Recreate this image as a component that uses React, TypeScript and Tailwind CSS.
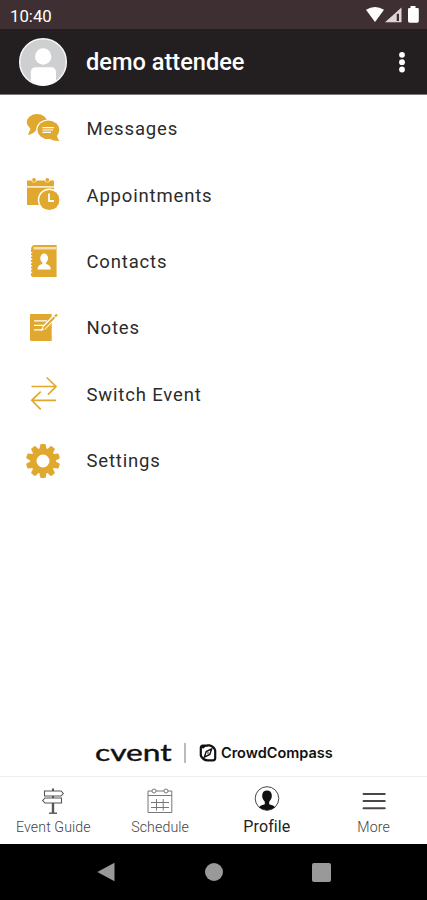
import type { ReactNode } from 'react';

interface MenuItem {
  label: string;
  icon: ReactNode;
}

interface TabProps {
  label: string;
  icon: ReactNode;
  active?: boolean;
}

const GOLD = '#e0a82e';

const MessagesIcon = () => (
  <svg width="40" height="40" viewBox="0 0 40 40" fill={GOLD}>
    <ellipse cx="14" cy="13" rx="10.3" ry="7.9" />
    <path d="M5 16 L7.5 20 L4.8 26 Q11 25 14 20 Z" />
    <ellipse cx="25.2" cy="20.8" rx="12" ry="10.4" fill="#fff" />
    <ellipse cx="25.4" cy="20.8" rx="10.9" ry="9.3" />
    <path d="M34.5 24 L34 27.5 L36.3 32 Q30 32 26 29.5 Z" />
    <path d="M19.5 18.6 H31 M19.5 21 H30 M19.5 23.4 H28" stroke="#fff" strokeWidth="1.2" />
  </svg>
);

const AppointmentsIcon = () => (
  <svg width="40" height="40" viewBox="0 0 40 40" fill={GOLD}>
    <path d="M4 5.6 H8.2 A3 3 0 0 0 13.8 5.6 H21.5 A3 3 0 0 0 27.1 5.6 H31 V11.2 H4 Z" />
    <circle cx="11" cy="5" r="1.9" />
    <circle cx="24.3" cy="5" r="1.9" />
    <path d="M4 12.6 H31 V30 H4 Z" />
    <circle cx="26.3" cy="25" r="11.5" fill="#fff" />
    <circle cx="26.3" cy="25" r="10.1" />
    <path d="M26 18.5 V26 H31" fill="none" stroke="#fff" strokeWidth="1.8" />
  </svg>
);

const ContactsIcon = () => (
  <svg width="40" height="40" viewBox="0 0 40 40" fill={GOLD}>
    <path d="M8 8 Q8 3 12 3 H33.6 V35 H10 Q8 35 8 33 Z" />
    <path d="M10.5 6.2 H33.6" stroke="#f5dfae" strokeWidth="2.6" />
    <path d="M8.3 10 V33" stroke="#fff" strokeWidth="1.8" strokeDasharray="1.3 2" />
    <ellipse cx="21.2" cy="16.2" rx="3.9" ry="4.6" fill="#fff" />
    <path d="M19.3 19 H23.1 V22 Q27.8 23.2 27.8 27.6 H14.5 Q14.5 23.2 19.3 22 Z" fill="#fff" />
  </svg>
);

const NotesIcon = () => (
  <svg width="40" height="40" viewBox="0 0 40 40" fill={GOLD}>
    <path d="M7 6 H28.7 V33 H8.5 Q7 33 7 31.5 Z" />
    <path d="M11 12.8 H24 M11 17.3 H21 M11 21.8 H19" stroke="#fff" strokeWidth="1.3" />
    <path d="M17.5 23.2 L20 17.5 L31 6.2 L34.4 9.4 L23 20.8 Z" fill="#fff" />
    <path d="M20.3 20.8 L31.4 9.2" stroke={GOLD} strokeWidth="2" />
    <path d="M32 8.6 L34 6.5" stroke={GOLD} strokeWidth="2.2" />
  </svg>
);

const SwitchIcon = () => (
  <svg width="40" height="40" viewBox="0 0 40 40" fill="none" stroke={GOLD} strokeWidth="1.7">
    <path d="M8.5 12.5 H32.7 M23.7 3.5 L33 12.5 L25 20.7" />
    <path d="M33 26.3 H9 M17.7 17.7 L8.8 26.3 L17.7 35.3" />
  </svg>
);

const TEETH = [0, 36, 72, 108, 144, 180, 216, 252, 288, 324];

const SettingsIcon = () => (
  <svg width="40" height="40" viewBox="0 0 40 40" fill={GOLD}>
    {TEETH.map(angle => (
      <path
        key={angle}
        d="M16.4 9 L17.2 4 Q17.4 3 18.4 3 H21.6 Q22.6 3 22.8 4 L23.6 9 Z"
        transform={`rotate(${angle} 20 20)`}
      />
    ))}
    <circle cx="20" cy="20" r="9.7" fill="none" stroke={GOLD} strokeWidth="6.4" />
  </svg>
);

const SignpostIcon = () => (
  <svg width="30" height="30" viewBox="0 0 30 30" fill="none" stroke="#555" strokeWidth="1.1">
    <path d="M15 2.5 V5 M15 10 V12" strokeWidth="2" />
    <path d="M11 27.2 H19" strokeWidth="1.4" />
    <path d="M15 17 V27" strokeWidth="2.4" />
    <path d="M6.5 5 H23 L25.3 7.5 L23 10 H6.5 Z" />
    <path d="M7 12 H23.5 V17 H7 L4.7 14.5 Z" />
  </svg>
);

const CalendarIcon = () => (
  <svg width="30" height="30" viewBox="0 0 30 30" fill="none" stroke="#777" strokeWidth="1">
    <path d="M7 5 H3 V26.5 H26.8 V5 H23 M11 5 H19" />
    <path d="M3 9.5 H26.8" />
    <circle cx="9" cy="5" r="2" />
    <circle cx="21" cy="5" r="2" />
    <path d="M6 16.5 H24 M6 21.5 H24 M11.5 13 V24.5 M18.2 13 V24.5" />
  </svg>
);

const ProfileIcon = () => (
  <svg width="30" height="30" viewBox="0 0 30 30">
    <circle cx="15" cy="12.5" r="11.8" fill="#fff" stroke="#444" strokeWidth="1" />
    <path d="M7 21.3 Q8 19.4 12.8 18.2 V15.7 C10.8 13.7 10 11.7 10.2 9.1 C10.5 5.9 12.4 4.6 15 4.6 C17.6 4.6 19.5 5.9 19.8 9.1 C20 11.7 19.2 13.7 17.2 15.7 V18.2 Q22 19.4 23 21.3 Q19.7 24.2 15 24.2 Q10.3 24.2 7 21.3 Z" fill="#111" />
  </svg>
);

const MoreIcon = () => (
  <svg width="30" height="30" viewBox="0 0 30 30" stroke="#4a4548" strokeWidth="2.1" strokeLinecap="round">
    <path d="M4.6 8 H25.7 M4.6 15 H25.7 M4.6 22.2 H25.7" />
  </svg>
);

const CompassIcon = () => (
  <svg width="20" height="20" viewBox="0 0 20 20" fill="none" stroke="#111">
    <path d="M4.2 5 A7.6 7.6 0 0 1 17.2 7.5 V15 Q17.2 17.3 15 17.3 H10 A7.6 7.6 0 0 1 2.8 12.5 V5 Q2.8 2.7 5 2.7 H10" strokeWidth="2.2" />
    <path d="M13.7 5.8 L11.8 11.5 L6.3 14.2 L8.2 8.5 Z" strokeWidth="1.4" />
    <circle cx="10" cy="10" r="0.8" fill="#111" stroke="none" />
  </svg>
);

const menuItems: MenuItem[] = [
  { label: 'Messages', icon: <MessagesIcon /> },
  { label: 'Appointments', icon: <AppointmentsIcon /> },
  { label: 'Contacts', icon: <ContactsIcon /> },
  { label: 'Notes', icon: <NotesIcon /> },
  { label: 'Switch Event', icon: <SwitchIcon /> },
  { label: 'Settings', icon: <SettingsIcon /> },
];

const StatusBar = () => (
  <div className="flex h-[29px] shrink-0 items-center justify-between bg-[#3e3032] pl-[10px] pr-[7px] text-white">
    <span className="pt-[3px] text-[16.8px] leading-none">10:40</span>
    <svg width="56" height="20" viewBox="0 0 56 20" fill="#fff">
      <path d="M2 4.8 Q11 -1 20 4.8 L11 17 Z" />
      <path d="M21 17.3 L37.5 2.5 V17.3 Z" fill="#ddd6d6" />
      <path d="M32.7 8.8 H35 V16 H32.7 Z" fill="#3e3032" />
      <path d="M46.5 1 H51.5 V3 H53.5 Q54.8 3 54.8 4.3 V16 Q54.8 17.7 53.2 17.7 H45.6 Q44 17.7 44 16 V4.3 Q44 3 45.3 3 H46.5 Z" />
    </svg>
  </div>
);

const Header = () => (
  <header className="flex h-[66px] shrink-0 items-center border-b border-[#777] bg-[#231f20] pl-[18px] pr-[13px]">
    <svg width="50" height="50" viewBox="0 0 50 50">
      <circle cx="25" cy="25" r="23.3" fill="#cdcfd0" stroke="#f5f5f5" strokeWidth="1.5" />
      <circle cx="25.2" cy="19.5" r="8.2" fill="#fff" />
      <path d="M12.8 43.8 V35.5 Q12.8 30.3 18 30.3 H32.8 Q38 30.3 38 35.5 V43.8 Q32 48.5 25 48.5 Q18 48.5 12.8 43.8 Z" fill="#fff" />
    </svg>
    <h1 className="ml-[18px] flex-1 pt-[3px] text-[23.6px] font-medium leading-none text-white">demo attendee</h1>
    <svg width="24" height="24" viewBox="0 0 24 24" fill="#fff">
      <circle cx="12" cy="4.8" r="2.9" />
      <circle cx="12" cy="12.2" r="2.9" />
      <circle cx="12" cy="19.5" r="2.9" />
    </svg>
  </header>
);

const Tab = ({ label, icon, active }: TabProps) => (
  <div className="flex flex-1 flex-col items-center pt-[9px]">
    {icon}
    <span
      className={
        active
          ? 'mt-px text-[16px] leading-[20px] tracking-[0.1px] text-[#222]'
          : 'mt-px text-[14.2px] font-light leading-[20px] tracking-[0.1px] text-[#444]'
      }
    >
      {label}
    </span>
  </div>
);

export default function App() {
  return (
    <div className="flex h-[900px] w-[427px] flex-col overflow-hidden bg-white font-['Roboto',sans-serif]">
      <StatusBar />
      <Header />

      <nav className="flex h-[399px] shrink-0 flex-col pt-[1px]">
        {menuItems.map(item => (
          <div key={item.label} className="flex flex-1 items-center pl-[23px]">
            {item.icon}
            <span className="ml-[23.5px] pt-px text-[18.5px] leading-none tracking-[0.83px] text-[#2b2b2b]">
              {item.label}
            </span>
          </div>
        ))}
      </nav>

      <div className="mt-auto flex h-[47px] shrink-0 items-center pl-[95px] text-[#111]">
        <div className="w-[78px]">
          <span className="inline-block origin-left scale-x-[1.38] pt-[3px] font-['Lato',sans-serif] text-[23px] leading-none [-webkit-text-stroke:0.4px_#111]">
            cvent
          </span>
        </div>
        <div className="ml-[11px] h-[20px] w-[2px] bg-[#bbb]" />
        <div className="ml-[12px] flex items-center gap-[3px]">
          <CompassIcon />
          <span className="inline-block origin-left scale-x-[1.035] pt-px font-['Inter',sans-serif] text-[14px] font-semibold leading-none">
            CrowdCompass
          </span>
        </div>
      </div>

      <div className="flex h-[68px] shrink-0 border-t border-[#eee]">
        <Tab label="Event Guide" icon={<SignpostIcon />} />
        <Tab label="Schedule" icon={<CalendarIcon />} />
        <Tab label="Profile" icon={<ProfileIcon />} active />
        <Tab label="More" icon={<MoreIcon />} />
      </div>

      <div className="flex h-[56px] shrink-0 items-center justify-center gap-[89px] bg-black">
        <svg width="20" height="20" viewBox="0 0 20 20" fill="#999">
          <path d="M1.3 10 L18.5 0.8 V19.2 Z" />
        </svg>
        <div className="h-[18px] w-[18px] rounded-full bg-[#999]" />
        <div className="h-[19px] w-[19px] rounded-[2px] bg-[#999]" />
      </div>
    </div>
  );
}
